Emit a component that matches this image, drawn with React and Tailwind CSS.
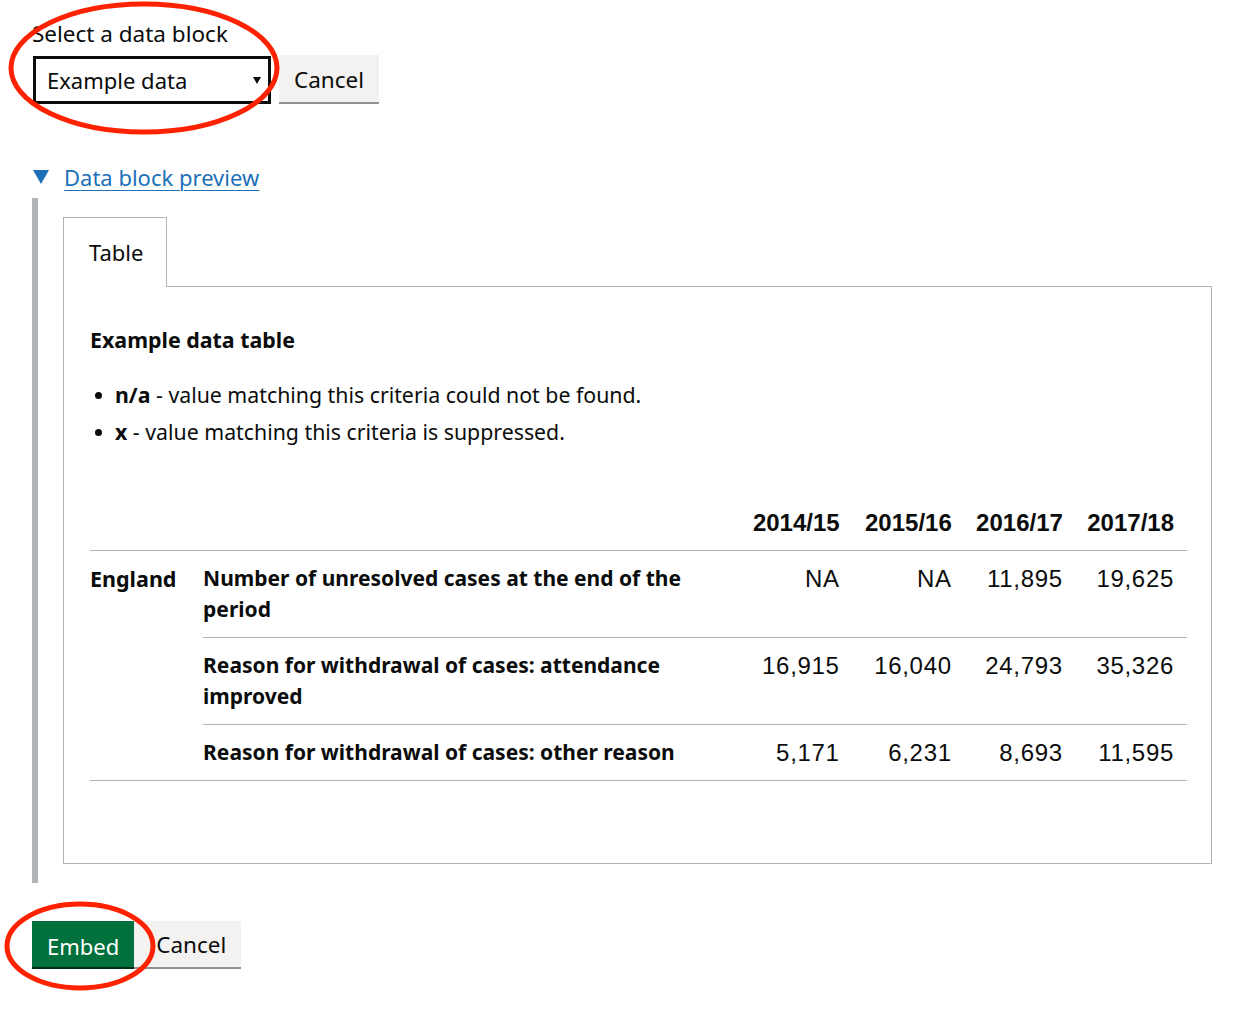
import React from "react";

const rows = [
  {
    label: "Number of unresolved cases at the end of the period",
    values: ["NA", "NA", "11,895", "19,625"],
  },
  {
    label: "Reason for withdrawal of cases: attendance improved",
    values: ["16,915", "16,040", "24,793", "35,326"],
  },
  {
    label: "Reason for withdrawal of cases: other reason",
    values: ["5,171", "6,231", "8,693", "11,595"],
  },
];

const years = ["2014/15", "2015/16", "2016/17", "2017/18"];

export default function App() {
  return (
    <div className="relative min-h-[1027px] bg-white pl-[32px] pt-[21px] font-['Noto_Sans',sans-serif] text-[#0b0c0c]">
      {/* Select row */}
      <div className="text-[22.5px] leading-[26px]">Select a data block</div>
      <div className="mt-[8px] flex items-start gap-[8px]">
        <div className="ml-[1px] mt-[1px] flex h-[48px] w-[238px] items-center justify-between border-[3px] border-[#0b0c0c] pl-[11px] pr-[7px] text-[22px]">
          <span>Example data</span>
          <svg width="8" height="7" viewBox="0 0 8 7">
            <path d="M0 0 H8 L4 7 Z" fill="#0b0c0c" />
          </svg>
        </div>
        <button className="flex h-[47px] items-center bg-[#f3f2f1] px-[15px] pt-[3px] text-[22.5px] leading-none shadow-[0_2px_0_#929191]">
          Cancel
        </button>
      </div>

      {/* Details */}
      <div className="mt-[60px] flex items-center text-[22px] leading-[26px]">
        <svg width="16" height="14" viewBox="0 0 16 14" className="ml-[1px]">
          <path d="M0 0 H16 L8 14 Z" fill="#1d70b8" />
        </svg>
        <span className="ml-[15px] text-[#1d70b8] underline decoration-1 underline-offset-[4px]">
          Data block preview
        </span>
      </div>

      <div className="mt-[8px] mr-[48px] border-l-[6px] border-[#b1b4b6] pb-[19px] pl-[25px] pt-[19px]">
        {/* Tabs */}
        <div className="flex">
          <div className="relative z-10 -mb-px flex h-[70px] w-[104px] items-center border border-b-0 border-[#b1b4b6] bg-white pl-[25px] text-[22px]">
            Table
          </div>
        </div>
        <div className="border border-[#b1b4b6] pb-[82px] pl-[26px] pr-[24px] pt-[38px]">
          <h3 className="text-[21.4px] font-bold leading-[30px]">Example data table</h3>
          <ul className="mt-[25px] text-[21.3px] leading-[30px]">
            <li className="flex items-center">
              <span className="ml-[5px] mr-[13px] h-[7px] w-[7px] rounded-full bg-[#0b0c0c]" />
              <span>
                <strong className="font-bold">n/a</strong> - value matching this criteria could not be found.
              </span>
            </li>
            <li className="mt-[7px] flex items-center">
              <span className="ml-[5px] mr-[13px] h-[7px] w-[7px] rounded-full bg-[#0b0c0c]" />
              <span>
                <strong className="font-bold">x</strong> - value matching this criteria is suppressed.
              </span>
            </li>
          </ul>

          <table className="mt-[48px] w-full table-fixed border-collapse text-left">
            <thead>
              <tr className="border-b border-[#b1b4b6]">
                <th className="w-[113px]" />
                <th className="w-[537px]" />
                {years.map((y, i) => (
                  <th
                    key={y}
                    className={`${i === 1 || i === 0 ? "w-[112px]" : "w-[111px]"} pb-[12px] pr-[13px] pt-[12px] text-right font-['Liberation_Sans',Arial,sans-serif] text-[24px] font-bold leading-[31px]`}
                  >
                    {y}
                  </th>
                ))}
              </tr>
            </thead>
            <tbody>
              {rows.map((r, idx) => (
                <tr key={idx}>
                  {idx === 0 && (
                    <th
                      rowSpan={3}
                      className="border-b border-[#b1b4b6] pb-[12px] pt-[12px] align-top text-[21.5px] font-bold leading-[31px]"
                    >
                      England
                    </th>
                  )}
                  <th className="border-b border-[#b1b4b6] pb-[12px] pr-[20px] pt-[12px] align-top text-[21px] font-bold leading-[31px]">
                    {r.label}
                  </th>
                  {r.values.map((v, j) => (
                    <td
                      key={j}
                      className="border-b border-[#b1b4b6] pb-[12px] pr-[13px] pt-[12px] text-right align-top font-['Liberation_Sans',Arial,sans-serif] text-[24px] leading-[31px] tracking-[0.7px]"
                    >
                      {v}
                    </td>
                  ))}
                </tr>
              ))}
            </tbody>
          </table>
        </div>
      </div>

      {/* Bottom buttons */}
      <div className="mt-[38px] flex items-start">
        <button className="flex h-[46px] items-center bg-[#00703c] px-[15px] pt-[3px] text-[22px] leading-none text-white shadow-[0_2px_0_#002d18]">
          Embed
        </button>
        <button className="flex h-[46px] items-center bg-[#f3f2f1] pl-[22px] pr-[15px] pt-[3px] text-[22.5px] leading-none shadow-[0_2px_0_#929191]">
          Cancel
        </button>
      </div>

      {/* Annotation ellipses */}
      <svg
        className="pointer-events-none absolute left-0 top-0"
        width="1260"
        height="1027"
        viewBox="0 0 1260 1027"
      >
        <ellipse cx="144" cy="68" rx="133" ry="64" fill="none" stroke="#ff2200" strokeWidth="5" />
        <ellipse cx="80" cy="946" rx="73" ry="42" fill="none" stroke="#ff2200" strokeWidth="5" />
      </svg>
    </div>
  );
}
